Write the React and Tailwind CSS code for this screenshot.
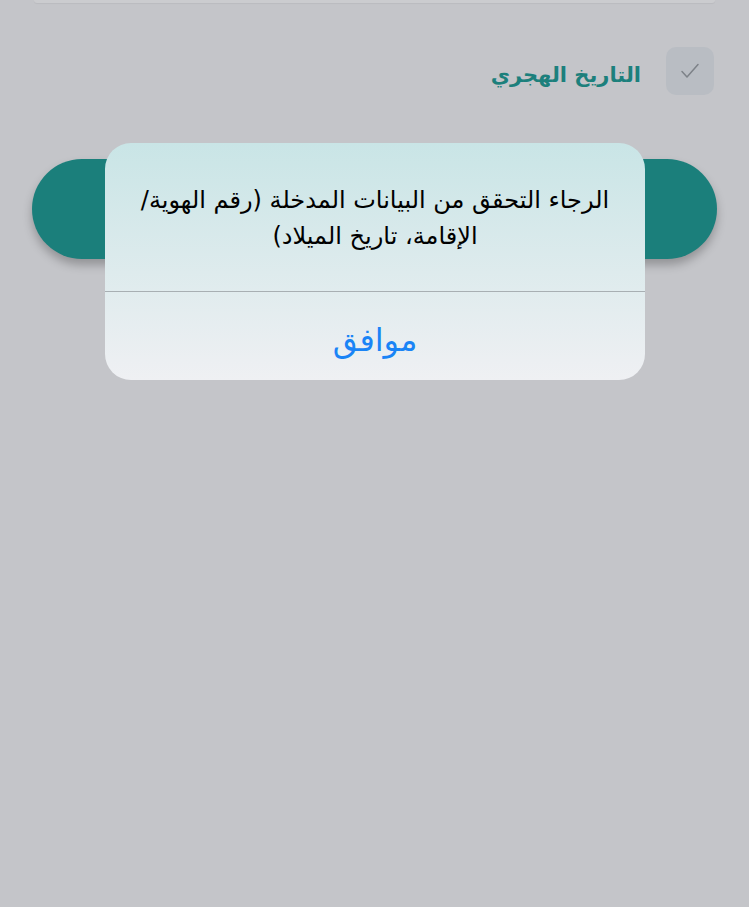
import React from 'react';

const App = () => {
  return (
    <div
      dir="rtl"
      className="relative h-[907px] w-full overflow-hidden bg-[#c4c5c9]"
      style={{ fontFamily: '"DejaVu Sans", sans-serif' }}
    >
      {/* top field, mostly scrolled off */}
      <div className="mx-[34px] h-[3px] rounded-b-[10px] bg-[#cbcccf] shadow-[0_1px_1px_rgba(0,0,0,0.05)]"></div>

      <div className="flex items-center gap-[25px] px-[35px] pt-[44px]">
        <div className="flex h-[48px] w-[48px] items-center justify-center rounded-[10px] bg-[#b9bdc3]">
          <svg width="24" height="24" viewBox="0 0 24 24" fill="none" stroke="#7d8288" strokeWidth="1.5" strokeLinecap="round" strokeLinejoin="round">
            <path d="M4 12.5l5 5.5L20 5.5" />
          </svg>
        </div>
        <span className="pt-[8px] text-[21px] font-bold leading-none text-[#1c807c]">التاريخ الهجري</span>
      </div>

      <div className="mx-[32px] mt-[64px] h-[100px] rounded-full bg-[#1b7f7b] shadow-[0_6px_10px_rgba(0,0,0,0.25)]"></div>

      {/* alert */}
      <div className="absolute left-[105px] top-[143px] w-[540px] overflow-hidden rounded-[26px] bg-gradient-to-b from-[#c9e5e6] to-[#eff0f3]">
        <div className="flex h-[148px] flex-col items-center justify-center px-[24px] pt-[2px] text-center text-[24px] leading-[36px] text-black">
          <p>الرجاء التحقق من البيانات المدخلة (رقم الهوية/</p>
          <p>الإقامة، تاريخ الميلاد)</p>
        </div>
        <div className="h-px bg-[#a8afb3]"></div>
        <button className="flex h-[88px] w-full items-center justify-center pt-[8px] text-[32px] text-[#1a84f6]">
          موافق
        </button>
      </div>
    </div>
  );
};

export default App;
